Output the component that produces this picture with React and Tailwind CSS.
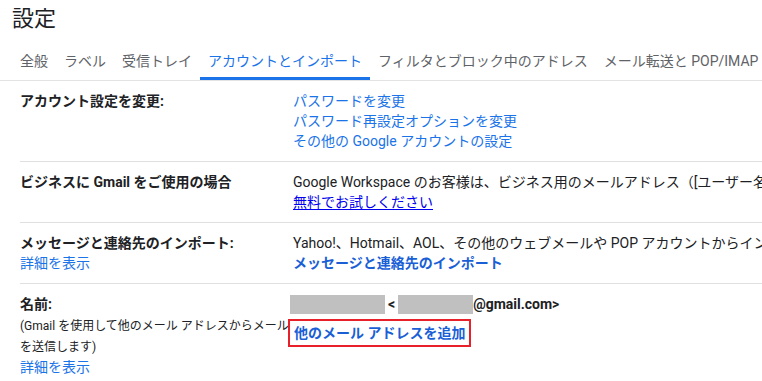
import React from 'react';

const tabs = [
  { label: '全般' },
  { label: 'ラベル' },
  { label: '受信トレイ' },
  { label: 'アカウントとインポート', active: true },
  { label: 'フィルタとブロック中のアドレス' },
  { label: 'メール転送と POP/IMAP' },
];

const Row = ({ label, children, first }) => (
  <div className={`flex py-[10px] ${first ? '' : 'border-t border-[#e0e0e0]'}`}>
    <div className="w-[273px] shrink-0">{label}</div>
    <div className="flex-1 min-w-0 whitespace-nowrap">{children}</div>
  </div>
);

const App = () => {
  return (
    <div className="w-[762px] h-[381px] overflow-hidden bg-white text-[14px] leading-[20px] text-[#202124] font-['Roboto','Noto_Sans_CJK_JP',sans-serif]">
      <div className="pl-[12px] pt-[5px] text-[22px] leading-[28px] text-[#202124]">設定</div>

      <div className="mt-[9px] flex border-b border-[#e3e3e3] pl-[12px] whitespace-nowrap">
        {tabs.map((t) => (
          <div
            key={t.label}
            className={`h-[38px] px-2 pt-[3px] flex items-center border-b-[3px] shrink-0 ${
              t.active ? 'border-[#1a73e8] text-[#1a73e8]' : 'border-transparent text-[#5f6368]'
            }`}
          >
            {t.label}
          </div>
        ))}
      </div>

      <div className="pl-[20px]">
        <Row first label={<div className="font-bold">アカウント設定を変更:</div>}>
          <div className="text-[#1a73e8]">パスワードを変更</div>
          <div className="text-[#1a73e8]">パスワード再設定オプションを変更</div>
          <div className="text-[#1a73e8]">その他の Google アカウントの設定</div>
        </Row>

        <Row label={<div className="font-bold">ビジネスに Gmail をご使用の場合</div>}>
          <div>Google Workspace のお客様は、ビジネス用のメールアドレス（[ユーザー名]@example.com）、大容量のストレージ、管理ツールをご利用いただけます。</div>
          <div>
            <span className="text-[#0000ee] underline underline-offset-2">無料でお試しください</span>
          </div>
        </Row>

        <Row
          label={
            <>
              <div className="font-bold">メッセージと連絡先のインポート:</div>
              <div className="text-[#1a73e8]">詳細を表示</div>
            </>
          }
        >
          <div>Yahoo!、Hotmail、AOL、その他のウェブメールや POP アカウントからインポートします。</div>
          <div className="font-bold text-[#1a5fd6]">メッセージと連絡先のインポート</div>
        </Row>

        <Row
          label={
            <>
              <div className="font-bold">名前:</div>
              <div className="mt-[2px] w-[275px] text-[12px] leading-[21px] text-[#202124]">
                (Gmail を使用して他のメール アドレスからメール を送信します)
              </div>
              <div className="text-[#1a73e8] leading-[18px]">詳細を表示</div>
            </>
          }
        >
          <div className="flex items-center h-[20px] -ml-[3px] font-bold">
            <span className="inline-block w-[95px] h-[19px] bg-[#c0c0c0]" />
            <span className="px-[3px]">&lt;</span>
            <span className="inline-block w-[75px] h-[19px] bg-[#c0c0c0]" />
            <span>@gmail.com&gt;</span>
          </div>
          <div className="mt-[5px] -ml-[5px] inline-block border-2 border-[#e8202a] px-[4px] py-[2px] font-bold text-[#1a5fd6]">
            他のメール アドレスを追加
          </div>
        </Row>
      </div>
    </div>
  );
};

export default App;
